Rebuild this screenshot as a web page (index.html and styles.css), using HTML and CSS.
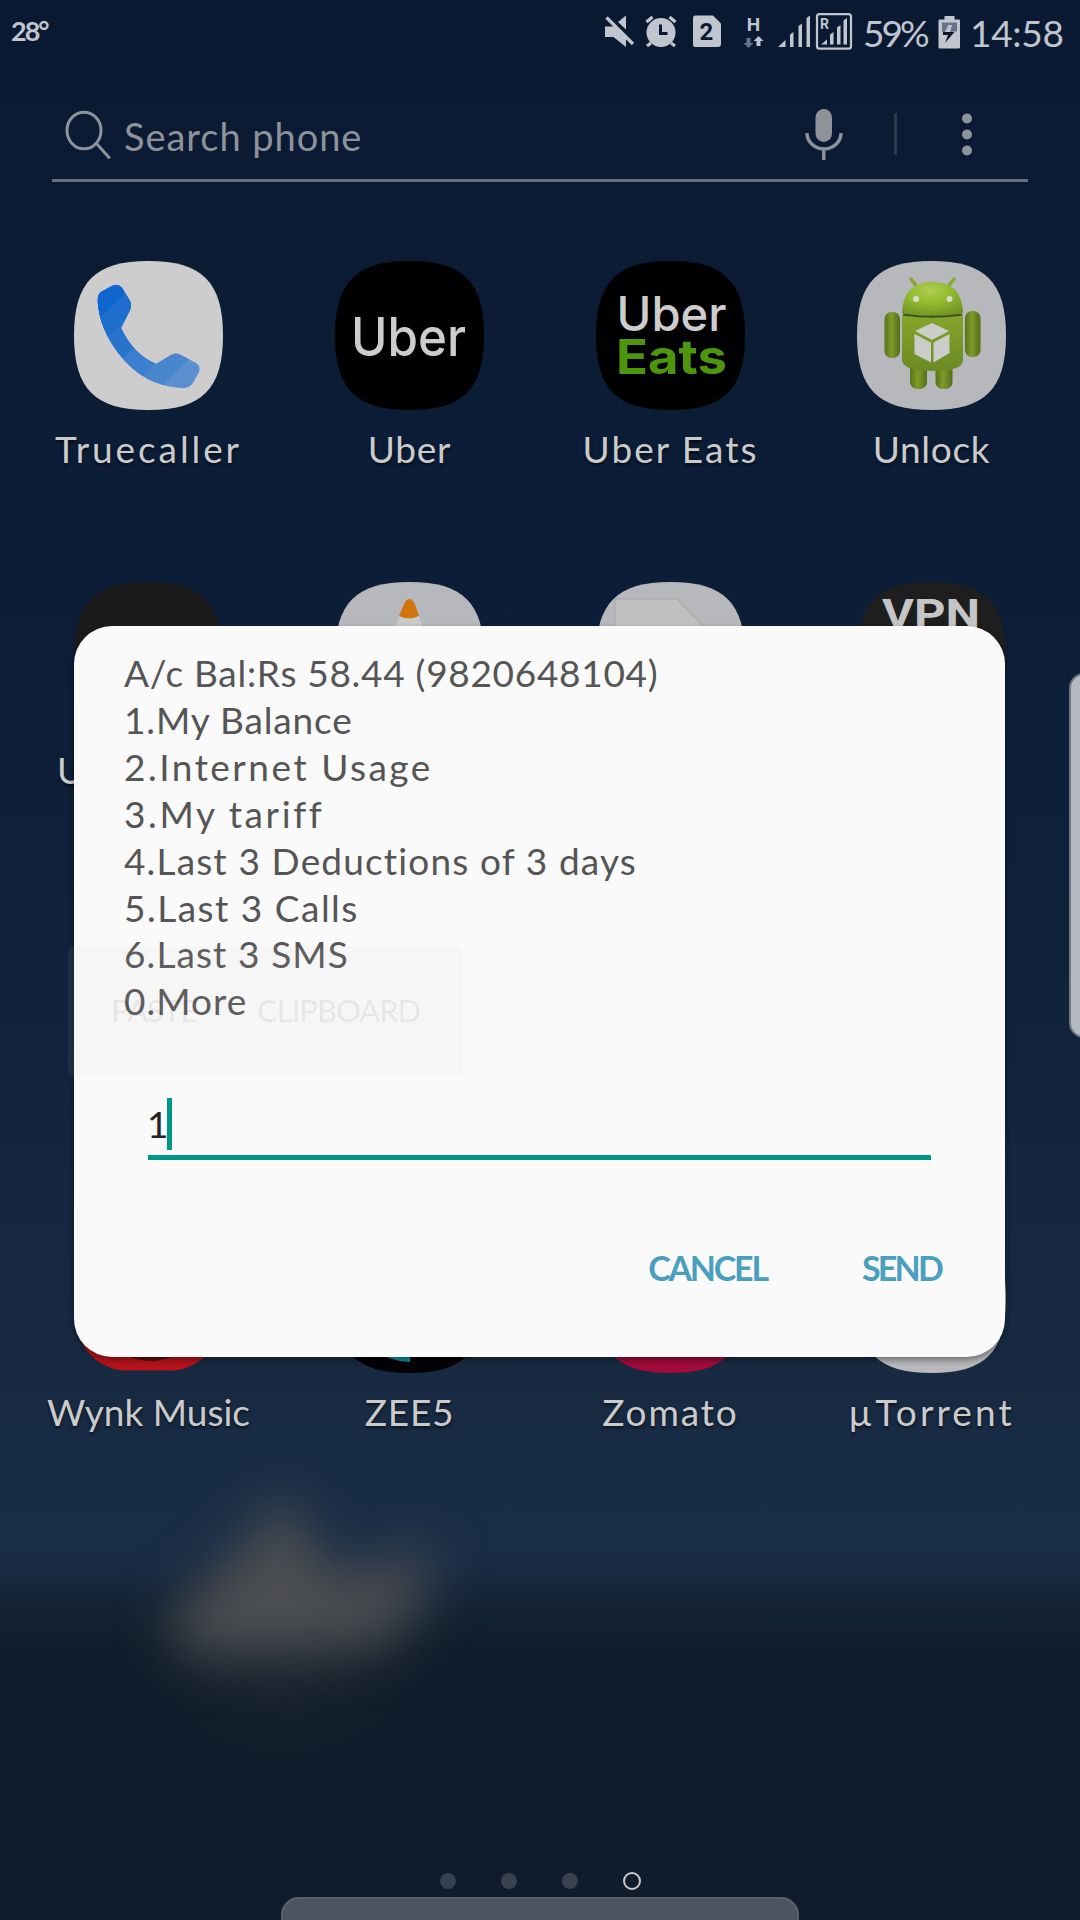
FILE: index.html
```html
<!DOCTYPE html>
<html lang="en">
<head>
<meta charset="utf-8">
<title>Phone</title>
<link rel="stylesheet" href="styles.css">
</head>
<body>
<div class="screen">
  <div class="wallpaper-glow">
    <svg width="1080" height="600" viewBox="0 1400 1080 600">
      <defs><filter id="soft" x="-60%" y="-80%" width="220%" height="260%" color-interpolation-filters="sRGB"><feGaussianBlur stdDeviation="27"/></filter>
      <filter id="softer" x="-150%" y="-150%" width="400%" height="400%" color-interpolation-filters="sRGB"><feGaussianBlur stdDeviation="45"/></filter></defs>
      <ellipse cx="285" cy="1640" rx="80" ry="60" fill="#3a4038" opacity=".35" filter="url(#softer)"/>
      <path d="M282 1492L335 1580L430 1548L425 1600L385 1645L190 1655L165 1620L235 1560Z" fill="#4e5052" filter="url(#soft)"/>
    </svg>
  </div>

  <header class="status-bar">
    <span class="temp">28°</span>
    <svg class="status-icons" width="250" height="52" viewBox="600 0 250 52" fill="#c1c5cd">
      <path d="M605 26.500h9l12 11.500v9l-12.500-10H605z"/>
      <path d="M618 22L626 15.500V29.500Z"/>
      <path d="M606.500 17.500L633 44" stroke="#c1c5cd" stroke-width="3.200"/>
      <g>
        <circle cx="661" cy="32.500" r="14.500"/>
        <path d="M646.500 22l6-5M675.500 22l-6-5M651 43l-4 3M671 43l4 3" stroke="#c1c5cd" stroke-width="3.200"/>
        <path d="M660.500 24.500v9h7" fill="none" stroke="#0a1a33" stroke-width="3"/>
      </g>
      <path d="M695 15.500h18l8 8V44q0 3-3 3h-23q-2 0-2-3V18q0-2.500 2-2.500z"/>
      <text class="sim" x="706.500" y="40" text-anchor="middle">2</text>
      <text class="net" x="753.500" y="31" text-anchor="middle">H</text>
      <path d="M746.500 38h4v5h3l-5 5-5-5h3z" fill="#68738a"/>
      <path d="M758.500 36l5 5h-3v5h-4v-5h-3z"/>
      <path d="M778 47h7.500v-7zM790 47h3.500V32l-3.500 2.500zM798.500 47h3.500V23.500l-3.500 2.500zM806.500 47h3.500V15.500l-3.500 2.500z"/>
      <rect x="817" y="14.200" width="34" height="34.500" rx="2.500" fill="none" stroke="#c1c5cd" stroke-width="2.200"/>
      <path d="M821 44.500h6v-5zM830 44.500h3.500V32l-3.500 2.500zM837 44.500h3.500V25l-3.500 2.500zM843.500 44.500h3.500V18l-3.500 2.500z"/>
      <text class="roam" x="824.500" y="28.500" text-anchor="middle">R</text>
    </svg>
    <span class="percent">59%</span>
    <svg class="battery" width="22" height="33" viewBox="0 0 22 33" fill="#c1c5cd">
      <path d="M6.500 0h10v3.500h4.500q1 0 1 1V31q0 1.500-1.500 1.500H2Q.500 32.500.500 31V4.500q0-1 1-1h5z"/>
      <path d="M4 6.500h15v9h-4l-3 1 2-7.500h-3.500l-3.500 7H4z" fill="#68738a"/>
      <path d="M5 16h11.500l-9.500 11 3-8H5z" fill="#101725"/>
    </svg>
    <span class="clock">14:58</span>
  </header>

  <div class="search">
    <svg class="lens" width="46" height="50" viewBox="0 0 46 50" fill="none" stroke="#8d929b" stroke-width="3"><ellipse cx="19" cy="20.500" rx="17" ry="18.300"/><path d="M31.500 33.500l12.500 14" stroke-linecap="round"/></svg>
    <span class="hint">Search phone</span>
    <svg class="mic" width="38" height="52" viewBox="0 0 38 52"><rect x="10.500" y="1" width="16.500" height="33" rx="8.200" fill="#8d929b"/><path d="M2 25a17 16 0 0 0 34 0M18.800 41v11" fill="none" stroke="#8d929b" stroke-width="3.400"/></svg>
    <i class="divider"></i>
    <svg class="more" width="12" height="44" viewBox="0 0 12 44" fill="#8d929b"><circle cx="6" cy="6.500" r="5"/><circle cx="6" cy="22.500" r="5"/><circle cx="6" cy="38.500" r="5"/></svg>
  </div>

  <svg width="0" height="0" class="defs"><defs>
    <path id="tile" d="M74.500 0C128 0 149 21 149 74.500S128 149 74.500 149 0 128 0 74.500 21 0 74.500 0Z"/>
    <clipPath id="tile-clip"><use href="#tile"/></clipPath>
    <linearGradient id="droid" x1="0" y1="0" x2="0" y2="1"><stop offset="0" stop-color="#86a52b"/><stop offset="1" stop-color="#6b8a25"/></linearGradient>
    <linearGradient id="limb" x1="0" y1="0" x2="1" y2="0"><stop offset="0" stop-color="#58711c"/><stop offset=".45" stop-color="#7d9d28"/><stop offset="1" stop-color="#546c1b"/></linearGradient>
    <radialGradient id="head" cx=".45" cy=".25" r=".8"><stop offset="0" stop-color="#b0cd52"/><stop offset=".45" stop-color="#92bb2e"/><stop offset="1" stop-color="#6e9222"/></radialGradient>
    <clipPath id="phone-clip"><path d="M24 43Q23 34 27 31L38 25Q44 22 48 27L56 40Q58 44 56 49L47 67Q59 93 82 103L97 94Q102 91 107 94L122 102Q127 105 125 111L119 122Q115 128 107 127Q70 125 45 93Q26 68 24 43Z"/></clipPath>
  </defs></svg>

  <main class="apps">
    <div class="app">
      <svg class="icon" viewBox="0 0 149 149"><use href="#tile" fill="#cdcdcd"/>
        <g clip-path="url(#phone-clip)"><path fill="#5b8fd0" d="M0 0h149v149H0z"/><path fill="#4a86cd" d="M0 0H149V64L60 153H0z"/><path fill="#3d7fce" d="M0 0H149V35L42 142H0z"/><path fill="#2874cd" d="M0 0H149V-2L27 120 0 149z"/><path fill="#1e6fcd" d="M0 0h106L0 112z"/><path fill="#0f66cf" d="M0 0h83L0 82z"/></g>
      </svg><span class="label l-true">Truecaller</span></div>
    <div class="app">
      <svg class="icon" viewBox="0 0 149 149"><use href="#tile"/><text class="brand" x="16" y="95" font-size="53" textLength="115" lengthAdjust="spacingAndGlyphs" fill="#cdcdcd">Uber</text></svg>
      <span class="label l-uber">Uber</span></div>
    <div class="app">
      <svg class="icon" viewBox="0 0 149 149"><use href="#tile"/><text class="brand" x="20.500" y="70" font-size="48" textLength="110" lengthAdjust="spacingAndGlyphs" fill="#cdcdcd">Uber</text><text class="brand eats" x="20" y="113" font-size="48" textLength="111" lengthAdjust="spacingAndGlyphs" fill="#4c950c">Eats</text></svg>
      <span class="label l-eats">Uber Eats</span></div>
    <div class="app">
      <svg class="icon" viewBox="0 0 149 149"><use href="#tile" fill="#b6b8bc"/>
        <path d="M54 18l7 9M97 18l-7 9" stroke="#86a833" stroke-width="3.500" stroke-linecap="round"/>
        <path d="M45 52Q46 21 75.500 21T106 52Q90 55 75.500 55T45 52Z" fill="url(#head)"/>
        <circle cx="59" cy="38" r="3" fill="#d8dccb"/><circle cx="92.500" cy="38" r="3" fill="#d8dccb"/>
        <rect x="53" y="100" width="17" height="28" rx="7" fill="url(#limb)"/><rect x="78.500" y="100" width="17" height="28" rx="7" fill="url(#limb)"/>
        <rect x="27.500" y="51" width="15.500" height="46" rx="7" fill="url(#limb)"/><rect x="108" y="50" width="15.500" height="46" rx="7" fill="url(#limb)"/>
        <path d="M45 54Q75 59 106 54V99Q106 110 76 110T45 99Z" fill="url(#droid)"/>
        <path d="M46 53.500Q75 58 105 53.500" stroke="#3c4f14" stroke-width="2" fill="none"/>
        <path d="M75 62l17 8-17 9-17-9zM57.500 73l16.500 8.500v20L57.500 93zM92.500 73L76.500 81.500v20L92.500 92z" fill="#cbcdc9"/>
      </svg><span class="label l-unlock">Unlock</span></div>

    <div class="app"><svg class="icon" viewBox="0 0 149 149"><use href="#tile" fill="#1b1b1b"/></svg><span class="label l-behind">U</span></div>
    <div class="app"><svg class="icon" viewBox="0 0 149 149"><use href="#tile" fill="#b6b8bc"/><path d="M64 34L70 20Q74 14 79 20L84 34Q74 39 64 34Z" fill="#cf750c"/><path d="M64 34Q74 39 84 34L92 60H56Z" fill="#cacaca"/></svg></div>
    <div class="app"><svg class="icon" viewBox="0 0 149 149"><use href="#tile" fill="#b6b8bc"/><path d="M19 60V17H81L109 46V60Z" fill="#bfc0c0" stroke="#adaeae" stroke-width="1.500"/></svg></div>
    <div class="app"><svg class="icon" viewBox="0 0 149 149"><use href="#tile" fill="#1e1e1e"/><text class="vpn" x="25" y="46" font-size="41" textLength="98" lengthAdjust="spacingAndGlyphs" fill="#c5c5c5">VPN</text></svg></div>

    <div class="app"></div><div class="app"></div><div class="app"></div><div class="app"></div>

    <div class="app"><svg class="icon" viewBox="0 0 149 149"><g clip-path="url(#tile-clip)"><path d="M0 0h149v146.500H0z" fill="#b5141a"/><circle cx="77" cy="87" r="50" fill="#5c0e10"/></g></svg><span class="label">Wynk Music</span></div>
    <div class="app"><svg class="icon" viewBox="0 0 149 149"><use href="#tile" fill="#040006"/><path d="M40 127Q58 138 75 138V120H40Z" fill="#0a9299"/></svg><span class="label l-zee">ZEE5</span></div>
    <div class="app"><svg class="icon" viewBox="0 0 149 149"><use href="#tile" fill="#a20b3b"/></svg><span class="label l-zom">Zomato</span></div>
    <div class="app"><svg class="icon" viewBox="0 0 149 149"><use href="#tile" fill="#b8b9bb"/></svg><span class="label l-tor">µTorrent</span></div>
  </main>

  <nav class="pages"><i></i><i></i><i></i><i class="current"></i></nav>
  <div class="tray"></div>
  <div class="edge-handle"></div>

  <section class="dialog">
    <div class="message">
      <p class="m1">A/c Bal:Rs 58.44 (9820648104)</p>
      <p class="m2">1.My Balance</p>
      <p class="m3">2.Internet Usage</p>
      <p class="m4">3.My tariff</p>
      <p class="m5">4.Last 3 Deductions of 3 days</p>
      <p class="m6">5.Last 3 Calls</p>
      <p class="m7">6.Last 3 SMS</p>
      <p class="m8">0.More</p>
    </div>
    <div class="field"><span>1</span><i class="caret"></i></div>
    <div class="actions"><span class="cancel">CANCEL</span><span class="send">SEND</span></div>
  </section>
  <div class="popup"><span class="paste">PASTE</span><span class="clip">CLIPBOARD</span></div>
</div>
</body>
</html>
```
FILE: styles.css
```css
* { box-sizing: border-box; }
body { margin: 0; font-family: Lato, "Open Sans", sans-serif; }
p { margin: 0; }
.screen {
  position: relative; width: 1080px; height: 1920px; overflow: hidden;
  background: linear-gradient(#0a1932 0, #0b1c34 260px, #0c1d38 600px, #10223a 950px, #172a42 1380px, #1a2d47 1540px, #192b44 1568px, #15253a 1592px, #122130 1620px, #111d2c 1650px, #101c2b 1920px);
}
.wallpaper-glow { position: absolute; left: 0; top: 1400px; }
.defs { position: absolute; }
.wallpaper-glow svg, .icon { display: block; }

.status-bar { display: flex; align-items: center; height: 64px; padding-left: 11px; color: #c1c5cd; white-space: nowrap; }
.temp { width: 589px; font-size: 27px; font-weight: 700; letter-spacing: -2px; padding-bottom: 3px; }
.status-icons { align-self: flex-start; flex: none; overflow: visible; }
.sim { font: 700 24px Roboto, sans-serif; fill: #0a1a33; }
.net { font: 700 19px Roboto, sans-serif; }
.roam { font: 700 14px Roboto, sans-serif; }
.percent { width: 75px; margin-left: 13px; font-size: 37px; letter-spacing: -2.9px; }
.battery { margin-left: 0; }
.clock { margin-left: 10px; font-size: 37px; letter-spacing: -.3px; }

.search { display: flex; align-items: center; width: 976px; height: 118px; margin-left: 52px; padding: 24px 0 0 13px; border-bottom: 3px solid #686e7c; color: #8d929b; }
.lens { margin-top: 3px; }
.hint { width: 681px; margin: 4px 0 0 13px; font-size: 38px; letter-spacing: .95px; white-space: nowrap; }
.divider { width: 3px; height: 42px; margin-left: 51px; background: #2c384c; }
.more { margin-left: 64px; }

.apps { position: relative; display: grid; grid-template-columns: repeat(4, 261px); grid-auto-rows: 321px; margin: 79px 0 0 18px; }
.app { display: flex; flex-direction: column; align-items: center; }
.icon { width: 149px; height: 149px; flex: none; }
.label { margin-top: 15px; font-size: 37px; line-height: 48px; color: #cbcbcb; white-space: nowrap; text-shadow: 0 2px 3px rgba(0,0,0,.6); }
.l-true { letter-spacing: 2.9px; }
.l-uber, .l-unlock, .l-zee { letter-spacing: .7px; }
.l-eats { letter-spacing: 2px; }
.l-zom { letter-spacing: 1.9px; }
.l-tor { letter-spacing: 3.1px; }
.l-behind { align-self: flex-start; margin-left: 39px; }
.brand { font-family: Inter, sans-serif; font-weight: 500; }
.eats { font-weight: 700; }
.vpn { font-family: Roboto, sans-serif; font-weight: 700; }

.pages { position: absolute; left: 440px; top: 1871px; display: flex; align-items: center; gap: 45px; height: 20px; }
.pages i { width: 16px; height: 16px; border-radius: 50%; background: #38424f; }
.pages .current { width: 18px; height: 18px; border: 2px solid #cbcbcb; background: none; }
.tray { position: absolute; left: 281px; top: 1897px; width: 518px; height: 40px; border-radius: 18px; background: #4c555f; border: 2px solid #59616c; }
.edge-handle { position: absolute; left: 1069px; top: 673px; width: 30px; height: 365px; border-radius: 15px; background: #b6bac3; border: 2px solid #71757f; }

.dialog { position: absolute; left: 74px; top: 626px; width: 931px; height: 731px; border-radius: 38px; background: #fafafa; box-shadow: 0 3px 6px rgba(0,0,0,.4); display: flex; flex-direction: column; }
.message { padding: 24px 0 0 50px; color: #555; font-size: 37px; line-height: 46.9px; white-space: nowrap; }
.m1 { letter-spacing: .7px; }
.m2 { letter-spacing: .85px; }
.m3 { letter-spacing: 2.5px; }
.m4 { letter-spacing: 2.6px; }
.m5 { letter-spacing: 1.15px; }
.m6 { letter-spacing: 1.5px; }
.m7 { letter-spacing: 1.1px; }
.m8 { letter-spacing: 1px; }
.field { display: flex; align-items: center; width: 783px; height: 62px; margin: 73px 0 0 74px; padding-bottom: 5px; border-bottom: 5px solid #009688; color: #222; font-size: 37px; }
.field span { width: 19px; letter-spacing: -2px; margin: 0 1px 2px -1px; }
.caret { width: 5px; height: 52px; background: #009688; }
.actions { display: flex; justify-content: flex-end; align-items: center; height: 60px; margin-top: 77px; padding-right: 64px; color: #4a9fbf; font-size: 34px; font-weight: 700; gap: 95px; }
.cancel { letter-spacing: -2.2px; }
.send { letter-spacing: -2.8px; }
.popup { position: absolute; left: 68px; top: 946px; width: 395px; height: 130px; border-radius: 6px; background: rgba(200,200,200,.08); display: flex; padding: 44px 0 0 43px; color: rgba(0,0,0,.075); font-size: 31px; line-height: 40px; letter-spacing: -1px; }
.paste { width: 146px; }
```
